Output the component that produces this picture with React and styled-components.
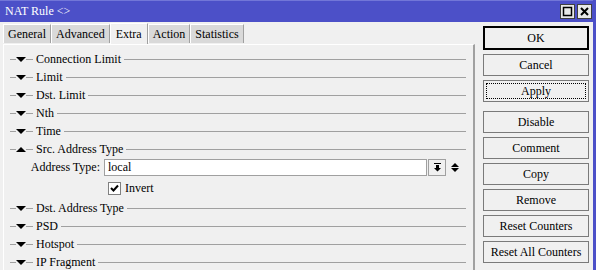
import React from "react";
import styled, { createGlobalStyle } from "styled-components";

const GlobalStyle = createGlobalStyle`
  html, body {
    margin: 0;
    padding: 0;
    background: #f0f0f0;
  }
  * {
    box-sizing: border-box;
  }
`;

const Window = styled.div`
  width: 596px;
  height: 270px;
  overflow: hidden;
  display: flex;
  flex-direction: column;
  background: #f0f0f0;
  border-right: 3px solid #4c50c8;
  font-family: "Liberation Serif", "Liberation Sans", sans-serif;
  font-size: 12px;
  color: #000;
`;

const TitleBar = styled.div`
  height: 22px;
  flex: none;
  display: flex;
  align-items: center;
  justify-content: space-between;
  padding: 0 1px 0 5px;
  background: #4c50c8;
  border-top: 1px solid #7276d8;
  color: #fff;
  font-size: 12px;
`;

const TitleButtons = styled.div`
  display: flex;
  gap: 2px;
`;

const TitleButton = styled.div`
  width: 15px;
  height: 15px;
  display: flex;
  align-items: center;
  justify-content: center;
  background: #e8e8e8;
  border: 1px solid #404040;
`;

const Body = styled.div`
  flex: 1;
  display: flex;
  min-height: 0;
`;

const Left = styled.div`
  width: 475px;
  flex: none;
  display: flex;
  flex-direction: column;
  padding-left: 3px;
`;

const Tabs = styled.div`
  display: flex;
  align-items: flex-end;
  height: 21px;
  flex: none;
`;

const Tab = styled.div`
  height: ${p => (p.$active ? "21px" : "19px")};
  padding: 0 ${p => (p.$active ? "5px" : "4px")};
  display: flex;
  align-items: center;
  background: ${p => (p.$active ? "#f0f0f0" : "#d9d9d9")};
  border-top: 1px solid #fff;
  border-left: 1px solid #fff;
  border-right: 1px solid #a0a0a0;
  margin-bottom: ${p => (p.$active ? "-1px" : "0")};
  position: relative;
  z-index: ${p => (p.$active ? 1 : 0)};
`;

const Panel = styled.div`
  flex: 1;
  border-top: 1px solid #fff;
  border-left: 1px solid #fff;
  border-right: 2px solid #a0a0a0;
  margin-top: 1px;
  padding: 5px 7px 0 6px;
  display: flex;
  flex-direction: column;
`;

const SectionRow = styled.div`
  height: 18px;
  flex: none;
  display: flex;
  align-items: center;
`;

const Rule = styled.div`
  height: 1px;
  background: #a0a0a0;
  width: ${p => (p.$w ? `${p.$w}px` : "auto")};
  flex: ${p => (p.$w ? "none" : "1")};
`;

const Arrow = styled.div`
  width: 0;
  height: 0;
  border-left: ${p => (p.$small ? 4 : 5)}px solid transparent;
  border-right: ${p => (p.$small ? 4 : 5)}px solid transparent;
  ${p =>
    p.$up
      ? `border-bottom: ${p.$small ? 4 : 5}px solid #000;`
      : `border-top: ${p.$small ? 4 : 5}px solid #000;`}
`;

const SectionLabel = styled.span`
  padding: 0 3px;
  white-space: nowrap;
`;

const FieldRow = styled.div`
  height: 19px;
  flex: none;
  display: flex;
  align-items: center;
`;

const FieldLabel = styled.span`
  width: 94px;
  text-align: right;
  padding-right: 4px;
  white-space: nowrap;
`;

const Input = styled.div`
  width: 323px;
  height: 17px;
  background: #fff;
  border: 1px solid #a0a0a0;
  display: flex;
  align-items: center;
  padding-left: 3px;
`;

const DropButton = styled.div`
  width: 18px;
  height: 17px;
  margin-left: 1px;
  border: 1px solid #a0a0a0;
  background: #f0f0f0;
  display: flex;
  align-items: center;
  justify-content: center;
`;

const Spinner = styled.div`
  margin-left: 5px;
  display: flex;
  flex-direction: column;
  gap: 1px;
`;

const CheckRow = styled.div`
  height: 22px;
  flex: none;
  display: flex;
  align-items: center;
  padding-left: 98px;
  gap: 4px;
`;

const CheckBox = styled.div`
  width: 13px;
  height: 13px;
  background: #fff;
  border: 1px solid #808080;
  display: flex;
  align-items: center;
  justify-content: center;
`;

const Side = styled.div`
  width: 106px;
  margin-left: 8px;
  padding-top: 4px;
  display: flex;
  flex-direction: column;
  gap: 4px;
`;

const Button = styled.div`
  height: ${p => (p.$default ? "24px" : "22px")};
  flex: none;
  display: flex;
  align-items: center;
  justify-content: center;
  background: #f0f0f0;
  border: ${p => (p.$default ? "2px solid #000" : "1px solid #7a7a7a")};
  margin-top: ${p => (p.$spaced ? "5px" : "0")};
  position: relative;
  white-space: nowrap;
  &::after {
    content: "";
    display: ${p => (p.$focus ? "block" : "none")};
    position: absolute;
    inset: 2px;
    border: 1px dotted #000;
  }
`;

const sections1 = ["Connection Limit", "Limit", "Dst. Limit", "Nth", "Time"];

const sections2 = ["Dst. Address Type", "PSD", "Hotspot", "IP Fragment"];

const Section = ({ label, open }) => (
  <SectionRow>
    <Rule $w={6} />
    <Arrow $up={open} />
    <Rule $w={7} />
    <SectionLabel>{label}</SectionLabel>
    <Rule />
  </SectionRow>
);

const buttons = [
  { label: "OK", $default: true },
  { label: "Cancel" },
  { label: "Apply", $focus: true },
  { label: "Disable", $spaced: true },
  { label: "Comment" },
  { label: "Copy" },
  { label: "Remove" },
  { label: "Reset Counters" },
  { label: "Reset All Counters" },
];

export default function App() {
  return (
    <>
      <GlobalStyle />
      <Window>
        <TitleBar>
          <span>NAT Rule &lt;&gt;</span>
          <TitleButtons>
            <TitleButton>
              <svg width="11" height="11" viewBox="0 0 11 11">
                <rect x="1.5" y="1.5" width="8" height="8" fill="none" stroke="#000" strokeWidth="1.5" />
              </svg>
            </TitleButton>
            <TitleButton>
              <svg width="11" height="11" viewBox="0 0 11 11">
                <path d="M2 2 L9 9 M9 2 L2 9" stroke="#000" strokeWidth="2" />
              </svg>
            </TitleButton>
          </TitleButtons>
        </TitleBar>
        <Body>
          <Left>
            <Tabs>
              <Tab>General</Tab>
              <Tab>Advanced</Tab>
              <Tab $active>Extra</Tab>
              <Tab>Action</Tab>
              <Tab>Statistics</Tab>
            </Tabs>
            <Panel>
              {sections1.map(s => (
                <Section key={s} label={s} />
              ))}
              <Section label="Src. Address Type" open />
              <FieldRow>
                <FieldLabel>Address Type:</FieldLabel>
                <Input>local</Input>
                <DropButton>
                  <svg width="9" height="9" viewBox="0 0 9 9">
                    <rect x="1" y="0" width="7" height="1" fill="#000" />
                    <path d="M3 2 H6 V5 H8 L4.5 8.5 L1 5 H3 Z" fill="#000" />
                  </svg>
                </DropButton>
                <Spinner>
                  <Arrow $up $small />
                  <Arrow $small />
                </Spinner>
              </FieldRow>
              <CheckRow>
                <CheckBox>
                  <svg width="9" height="9" viewBox="0 0 9 9">
                    <path d="M1 4 L3.5 6.5 L8 1.5" fill="none" stroke="#000" strokeWidth="2" />
                  </svg>
                </CheckBox>
                <span>Invert</span>
              </CheckRow>
              {sections2.map(s => (
                <Section key={s} label={s} />
              ))}
            </Panel>
          </Left>
          <Side>
            {buttons.map(({ label, ...rest }) => (
              <Button key={label} {...rest}>
                {label}
              </Button>
            ))}
          </Side>
        </Body>
      </Window>
    </>
  );
}
